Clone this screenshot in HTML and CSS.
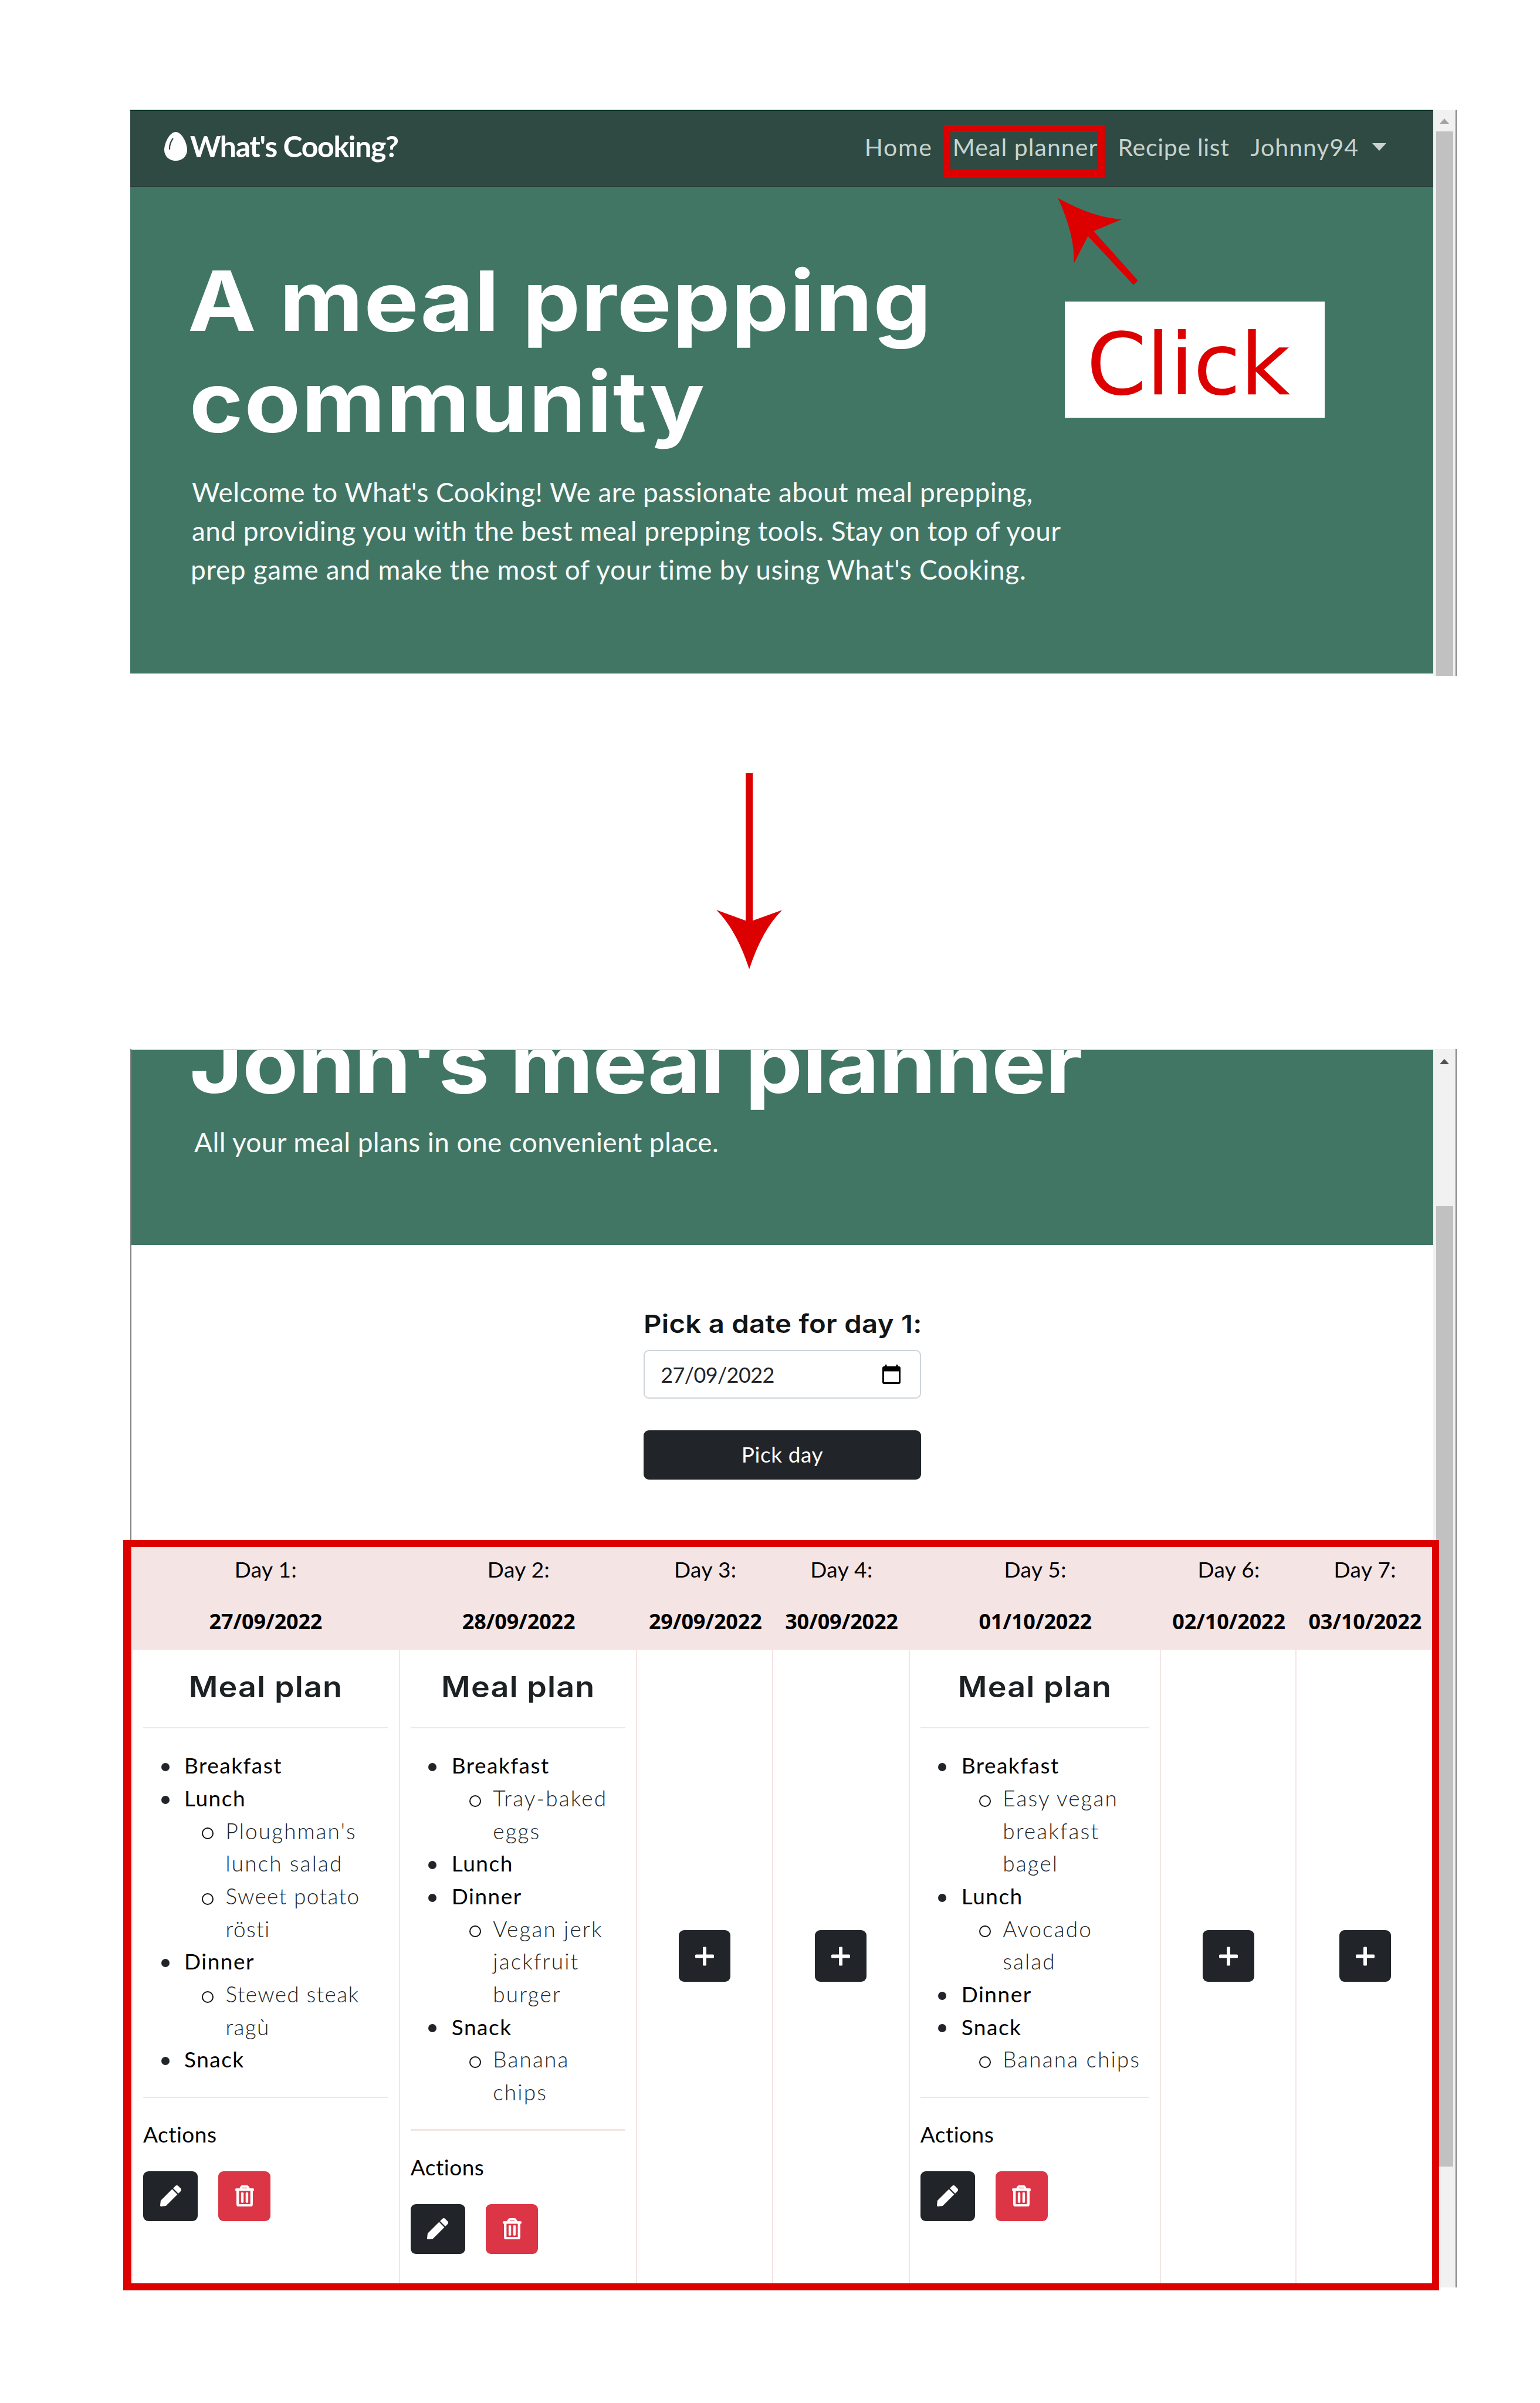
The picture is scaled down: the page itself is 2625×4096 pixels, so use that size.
FILE: index.html
```html
<!DOCTYPE html>
<html lang="en">
<head>
<meta charset="utf-8">
<title>What's Cooking? – Meal planner guide</title>
<link rel="stylesheet" href="styles.css">
</head>
<body>
<svg class="defs" aria-hidden="true">
  <symbol id="pen" viewBox="0 0 512 512"><path d="M290.74 93.24l128.02 128.02-277.99 277.99-114.14 12.6C11.35 513.54-1.56 500.62.14 485.34l12.7-114.22 277.9-277.88zm207.2-19.06l-60.11-60.11c-18.75-18.75-49.16-18.75-67.91 0l-56.55 56.55 128.02 128.02 56.55-56.55c18.75-18.76 18.75-49.16 0-67.91z"/></symbol>
  <symbol id="trash" viewBox="0 0 448 512"><path d="M268 416h24a12 12 0 0 0 12-12V188a12 12 0 0 0-12-12h-24a12 12 0 0 0-12 12v216a12 12 0 0 0 12 12zM432 80h-82.41l-34-56.7A48 48 0 0 0 274.41 0H173.59a48 48 0 0 0-41.16 23.3L98.41 80H16A16 16 0 0 0 0 96v16a16 16 0 0 0 16 16h16v336a48 48 0 0 0 48 48h288a48 48 0 0 0 48-48V128h16a16 16 0 0 0 16-16V96a16 16 0 0 0-16-16zM171.84 50.91A6 6 0 0 1 177 48h94a6 6 0 0 1 5.15 2.91L293.61 80H154.39zM368 464H80V128h288zm-212-48h24a12 12 0 0 0 12-12V188a12 12 0 0 0-12-12h-24a12 12 0 0 0-12 12v216a12 12 0 0 0 12 12z"/></symbol>
  <symbol id="plus" viewBox="0 0 32 32"><path d="M13 1.5Q13 0 14.5 0h3Q19 0 19 1.500V13H30.500Q32 13 32 14.500v3Q32 19 30.500 19H19V30.500Q19 32 17.500 32h-3Q13 32 13 30.500V19H1.500Q0 19 0 17.500v-3Q0 13 1.500 13H13z"/></symbol>
</svg>

<section class="shot home">
  <div class="page">
    <nav class="navbar">
      <a class="brand">
        <svg class="egg" viewBox="0 0 39 49"><path d="M19.500 0C9 0 0 19 0 30.500 0 41.500 8.500 49 19.500 49S39 41.500 39 30.500C39 19 30 0 19.500 0z" fill="#fff"/><path d="M14.500 11.500C10.500 17 8.800 23 9 29" fill="none" stroke="#2f4a42" stroke-width="2.200" stroke-linecap="round"/></svg>
        <span class="brand-name">What's Cooking?</span>
      </a>
      <div class="links">
        <a class="l-home">Home</a>
        <a class="l-planner">Meal planner</a>
        <a class="l-recipes">Recipe list</a>
        <a class="l-user">Johnny94</a>
        <span class="caret"></span>
      </div>
    </nav>
    <header class="hero">
      <h1><span class="t1">A meal prepping</span><span class="t2">community</span></h1>
      <p><span class="p1">Welcome to What's Cooking! We are passionate about meal prepping,</span><span class="p2">and providing you with the best meal prepping tools. Stay on top of your</span><span class="p3">prep game and make the most of your time by using What's Cooking.</span></p>
    </header>
  </div>
  <div class="scrollbar"><i class="up"></i><i class="thumb"></i></div>
</section>

<svg class="down" viewBox="0 0 112.400 334"><path d="M50.100 0H62.100V251.300L112.400 233Q78.300 266.200 56.100 334Q33.900 266.200 0 233L50.100 251.300z" fill="#d00"/></svg>

<section class="shot planner">
  <div class="page">
    <header class="hero">
      <h1>John's meal planner</h1>
      <p>All your meal plans in one convenient place.</p>
    </header>
    <form class="picker">
      <label>Pick a date for day 1:</label>
      <div class="date"><span>27/09/2022</span>
        <svg viewBox="0 0 31 33"><path d="M4.500 0h3v3h16V0h3v3H28a3 3 0 0 1 3 3v24a3 3 0 0 1-3 3H3a3 3 0 0 1-3-3V6a3 3 0 0 1 3-3h1.500zM3 11.500v18.500h25V11.500z"/></svg>
      </div>
      <div class="submit">Pick day</div>
    </form>
    <div class="week">
      <div class="head"><span>Day 1:</span><b>27/09/2022</b></div>
      <div class="head"><span>Day 2:</span><b>28/09/2022</b></div>
      <div class="head"><span>Day 3:</span><b>29/09/2022</b></div>
      <div class="head"><span>Day 4:</span><b>30/09/2022</b></div>
      <div class="head"><span>Day 5:</span><b>01/10/2022</b></div>
      <div class="head"><span>Day 6:</span><b>02/10/2022</b></div>
      <div class="head"><span>Day 7:</span><b>03/10/2022</b></div>

      <div class="cell first">
        <h2>Meal plan</h2><hr>
        <ul>
          <li>Breakfast</li>
          <li>Lunch<ul><li>Ploughman's<br>lunch salad</li><li class="tight">Sweet potato<br>rösti</li></ul></li>
          <li>Dinner<ul><li class="tight">Stewed steak<br>ragù</li></ul></li>
          <li>Snack</li>
        </ul>
        <hr><p class="label">Actions</p>
        <div class="actions"><span class="btn edit"><svg><use href="#pen"/></svg></span><span class="btn del"><svg><use href="#trash"/></svg></span></div>
      </div>
      <div class="cell">
        <h2>Meal plan</h2><hr>
        <ul>
          <li>Breakfast<ul><li>Tray-baked<br>eggs</li></ul></li>
          <li>Lunch</li>
          <li>Dinner<ul><li>Vegan jerk<br>jackfruit<br>burger</li></ul></li>
          <li>Snack<ul><li>Banana<br>chips</li></ul></li>
        </ul>
        <hr><p class="label">Actions</p>
        <div class="actions"><span class="btn edit"><svg><use href="#pen"/></svg></span><span class="btn del"><svg><use href="#trash"/></svg></span></div>
      </div>
      <div class="cell"><span class="btn add"><svg><use href="#plus"/></svg></span></div>
      <div class="cell"><span class="btn add"><svg><use href="#plus"/></svg></span></div>
      <div class="cell">
        <h2>Meal plan</h2><hr>
        <ul>
          <li>Breakfast<ul><li>Easy vegan<br>breakfast<br>bagel</li></ul></li>
          <li>Lunch<ul><li>Avocado<br>salad</li></ul></li>
          <li>Dinner</li>
          <li>Snack<ul><li>Banana chips</li></ul></li>
        </ul>
        <hr><p class="label">Actions</p>
        <div class="actions"><span class="btn edit"><svg><use href="#pen"/></svg></span><span class="btn del"><svg><use href="#trash"/></svg></span></div>
      </div>
      <div class="cell"><span class="btn add"><svg><use href="#plus"/></svg></span></div>
      <div class="cell last"><span class="btn add"><svg><use href="#plus"/></svg></span></div>
    </div>
  </div>
  <div class="scrollbar"><i class="up"></i><i class="thumb"></i></div>
</section>

<!-- Annotations drawn over the two screens -->
<div class="mark mark-link"></div>
<svg class="pointer" viewBox="1803 337 137 149"><path d="M1803.300 337.400Q1865.500 372 1912.700 373.600L1864.200 393.900L1939.700 478.200L1932.100 485.800L1854.500 402.600L1830.300 449.200Q1832.800 402 1803.300 337.400z" fill="#d00"/></svg>
<div class="click">Click</div>
<div class="mark mark-week"></div>
</body>
</html>
```
FILE: styles.css
```css
* { box-sizing: border-box; }
body {
  margin: 0;
  width: 2625px;
  height: 4096px;
  background: #fff;
  position: relative;
  overflow: hidden;
  display: flex;
  flex-direction: column;
  font-family: Lato, sans-serif;
  color: #000;
}
h1, h2, p, ul { margin: 0; padding: 0; font-weight: inherit; }
.defs { position: absolute; width: 0; height: 0; }

/* Screens */
.shot { display: flex; margin-left: 222px; width: 2261px; border-right: 2px solid #808080; overflow: hidden; flex: none; }
.page { flex: 1; min-width: 0; display: flex; flex-direction: column; }
.home { margin-top: 187px; height: 965px; }
.planner { margin-top: 136px; height: 2111px; border-left: 2px solid #808080; }

.scrollbar { width: 38px; background: #f1f1f1; padding: 0 4.500px; display: flex; flex-direction: column; align-items: center; flex: none; }
.up { border: 8.500px solid transparent; border-top: 0; border-bottom: 9px solid #a3a3a3; margin-top: 15px; }
.thumb { width: 29px; background: #c1c1c1; margin-top: 13px; height: 928px; }
.planner .up { border-bottom-color: #505050; margin-top: 17px; }
.planner .thumb { margin-top: 242px; height: 1637px; }

/* Navbar */
.navbar { height: 132px; background: #2f4a42; border-top: 2px solid #03301f; border-bottom: 2px solid #2a4039; padding: 0 0 8px 58px; display: flex; align-items: center; flex: none; }
.brand { display: flex; align-items: center; gap: 5px; }
.egg { width: 39px; height: 49px; }
.brand-name { font-size: 50px; font-weight: 700; letter-spacing: -1.360px; color: #fff; white-space: nowrap; line-height: 60px; }
.links { margin-left: auto; display: grid; grid-template-columns: 150.200px 281.700px 226px 207.500px 104px; align-items: center; padding-top: 3px; font-size: 41px; line-height: 50px; color: #c8d3cf; }
.links a { white-space: nowrap; }
.l-home { letter-spacing: 1.690px; }
.l-planner { letter-spacing: 1.050px; }
.l-recipes { letter-spacing: .7px; }
.l-user { letter-spacing: .98px; }
.caret { width: 0; border: 12.500px solid transparent; border-bottom: 0; border-top: 13px solid #c8d3cf; }

/* Hero */
.hero { background: #417665; color: #fff; flex: none; overflow: hidden; }
.home .hero { height: 828.500px; padding: 106.800px 0 0 98px; }
.hero h1 { font: 700 142px/172px Inter, sans-serif; white-space: nowrap; transform: scaleX(1.1); transform-origin: 0 0; }
.hero h1 span, .hero p span { display: block; }
.t1 { letter-spacing: 1.300px; }
.t2 { letter-spacing: 1.600px; padding-left: 2.500px; }
.hero p { font-size: 46px; line-height: 66px; white-space: nowrap; color: #f7faf9; }
.home .hero p { margin-top: 36.300px; padding-left: 7px; }
.p1 { letter-spacing: .44px; }
.p2 { letter-spacing: .42px; }
.p3 { letter-spacing: .66px; margin-left: -2px; }
.planner .hero { height: 334.300px; border-top: 2px solid #dcdcdc; padding-left: 99px; }
.planner .hero h1 { margin-top: -64.900px; letter-spacing: -1.100px; }
.planner .hero p { margin-top: 16.600px; padding-left: 8px; letter-spacing: .38px; }

/* Date picker */
.picker { width: 472.700px; margin: 107.700px auto 0; flex: none; }
.picker label { display: block; font: 600 43px/52px Inter, sans-serif; letter-spacing: .250px; white-space: nowrap; color: #111517; transform: scaleX(1.1); transform-origin: 0 0; }
.date { margin-top: 18.900px; height: 83.600px; border: 2.300px solid #ced4da; border-radius: 9px; display: flex; align-items: center; justify-content: space-between; padding: 0 33px 0 27px; font-size: 36px; letter-spacing: -.6px; color: #212529; }
.date svg { width: 31px; height: 33px; }
.submit { margin-top: 53.200px; height: 84px; line-height: 82px; border-radius: 9px; background: #212529; color: #fff; text-align: center; font-size: 37px; letter-spacing: .6px; }

/* Week table */
.week { margin-top: 114.500px; flex: 1; display: grid; grid-template: 175.400px 1fr / 457.800px 404.500px 231.900px 232.500px 428px 231.800px 232.500px; }
.head { background: #f5e4e4; padding-top: 11px; text-align: center; font-size: 37px; line-height: 56px; letter-spacing: .4px; }
.head span, .head b { display: block; }
.head b { margin-top: 32.600px; font: 700 36px/56px "Noto Sans", sans-serif; letter-spacing: -.2px; }
.cell { border-right: 2px solid #f5e4e4; padding: 34.500px 18px 0; }
.cell.first { border-left: 2px solid #f5e4e4; }
.cell.last { border-right: 0; }
.cell h2 { font: 600 49px/60px Inter, sans-serif; letter-spacing: 1px; text-align: center; color: #1c2124; white-space: nowrap; transform: scaleX(1.1); }
.cell hr { margin: 38px 0 35px; height: 2.300px; border: 0; background: #f5e4e4; }
.cell ul + hr { margin: 35.500px 0 34.500px; }
.cell ul { list-style: none; padding-left: 70px; font-size: 37px; line-height: 55.670px; letter-spacing: 1.500px; }
.cell li { position: relative; white-space: nowrap; }
.cell li::before { content: ""; position: absolute; left: -39.500px; top: 23.500px; width: 14px; height: 14px; border-radius: 50%; background: #212529; }
.cell li ul { font-weight: 300; letter-spacing: 2.100px; color: #1e2629; padding-left: 70.500px; }
.cell li li.tight { letter-spacing: 1.350px; }
.cell li li::before { left: -40.500px; top: 22.500px; width: 16px; height: 16px; background: none; border: 2.500px solid #111; }
.label { font-size: 37px; line-height: 56px; letter-spacing: .5px; }
.actions { margin-top: 34.500px; display: flex; gap: 35.300px; }
.btn { display: flex; align-items: center; justify-content: center; border-radius: 9px; height: 85px; background: #212529; fill: #fff; }
.edit { width: 93px; }
.edit svg { width: 36px; height: 36px; }
.del { width: 89px; background: #dc3545; }
.del svg { width: 32px; height: 36px; stroke: #fff; stroke-width: 14px; }
.add { width: 88px; height: 88px; margin: 444px auto 0; }
.add svg { width: 32px; height: 33px; }

/* Annotations */
.down { width: 112.400px; height: 334px; margin: 166px 0 0 1220.900px; flex: none; }
.mark { position: absolute; border: 12px solid #d00; }
.mark-link { left: 1608px; top: 213px; width: 275px; height: 89px; }
.mark-week { left: 210.400px; top: 2624.800px; width: 2243px; height: 1279.200px; border-left-width: 13px; }
.pointer { position: absolute; left: 1803px; top: 337px; width: 137px; height: 149px; }
.click { position: absolute; left: 1815px; top: 514.400px; width: 443px; height: 198px; padding-left: 37px; background: #fff; color: #d00; font: 147px/216px "DejaVu Sans", sans-serif; letter-spacing: -.8px; }
```
